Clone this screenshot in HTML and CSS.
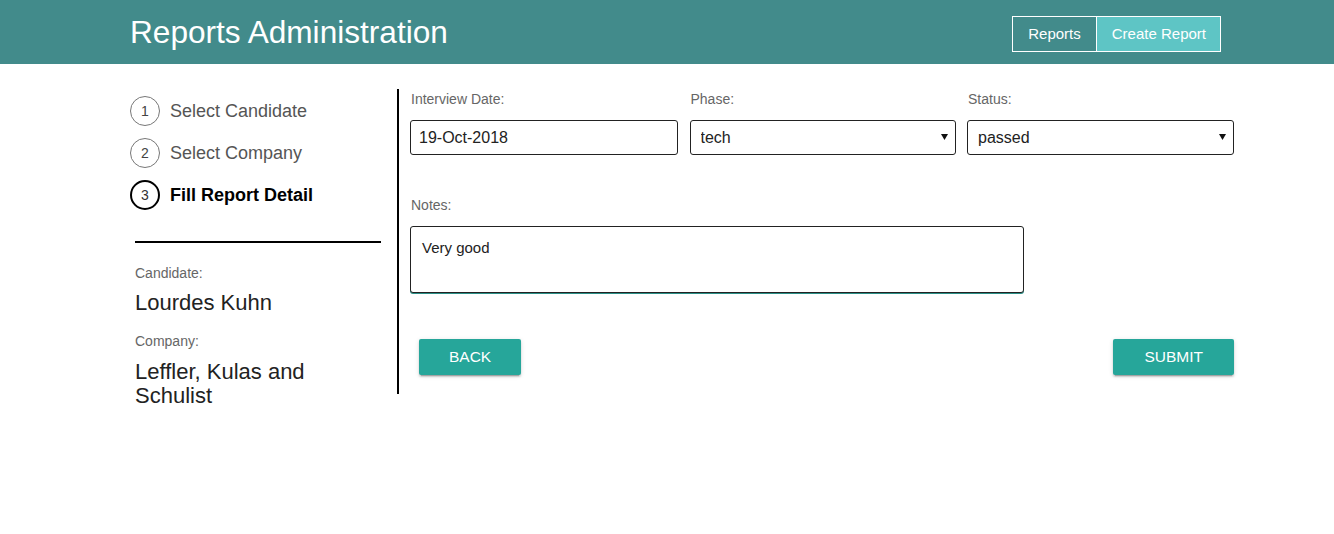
FILE: index.html
```html
<!DOCTYPE html>
<html>
<head>
<meta charset="utf-8">
<link rel="stylesheet" href="styles.css">
</head>
<body>
<header class="topbar">
  <div class="topbar-inner">
    <h1 class="title">Reports Administration</h1>
    <nav class="nav">
      <a class="nav-btn">Reports</a>
      <a class="nav-btn active">Create Report</a>
    </nav>
  </div>
</header>
<main class="page">
  <aside class="sidebar">
    <ol class="steps">
      <li class="step"><span class="step-num">1</span><span class="step-label">Select Candidate</span></li>
      <li class="step"><span class="step-num">2</span><span class="step-label">Select Company</span></li>
      <li class="step current"><span class="step-num">3</span><span class="step-label">Fill Report Detail</span></li>
    </ol>
    <hr class="divider">
    <div class="summary">
      <div class="sum-label">Candidate:</div>
      <div class="sum-value">Lourdes Kuhn</div>
      <div class="sum-label">Company:</div>
      <div class="sum-value">Leffler, Kulas and Schulist</div>
    </div>
  </aside>
  <section class="form">
    <div class="row3">
      <div class="field">
        <label class="label">Interview Date:</label>
        <input class="input" type="text" value="19-Oct-2018">
      </div>
      <div class="field">
        <label class="label">Phase:</label>
        <div class="select-wrap">
          <select class="input select"><option>tech</option></select>
          <svg class="caret" width="7" height="6" viewBox="0 0 7 6"><path d="M0 0H7L3.5 6Z" fill="#111"/></svg>
        </div>
      </div>
      <div class="field">
        <label class="label">Status:</label>
        <div class="select-wrap">
          <select class="input select"><option>passed</option></select>
          <svg class="caret" width="7" height="6" viewBox="0 0 7 6"><path d="M0 0H7L3.5 6Z" fill="#111"/></svg>
        </div>
      </div>
    </div>
    <div class="field notes">
      <label class="label">Notes:</label>
      <textarea class="textarea">Very good</textarea>
    </div>
    <div class="actions">
      <button class="btn">BACK</button>
      <button class="btn">SUBMIT</button>
    </div>
  </section>
</main>
</body>
</html>
```
FILE: styles.css
```css
* { box-sizing: border-box; }
body {
  margin: 0;
  font-family: "Liberation Sans", Arial, sans-serif;
  color: #222;
  background: #fff;
}
.topbar {
  background: #428b8b;
  height: 64px;
}
.topbar-inner {
  width: 1091px;
  margin-left: 130px;
  height: 64px;
  display: flex;
  align-items: center;
  justify-content: space-between;
}
.title {
  margin: 0;
  font-weight: normal;
  font-size: 31.6px;
  color: #fff;
  line-height: 1;
  position: relative;
  top: 1px;
}
.nav {
  display: flex;
  margin-top: 3px;
}
.nav-btn {
  display: block;
  height: 36px;
  line-height: 34px;
  padding: 0 15px;
  font-size: 15px;
  color: #fff;
  border: 1px solid #fff;
  cursor: pointer;
}
.nav-btn + .nav-btn { border-left: none; }
.nav-btn.active { background: #5ec5c5; padding: 0 14px 0 15px; }

.page {
  display: flex;
  width: 1104px;
  margin: 25px 0 0 130px;
  align-items: flex-start;
}
.sidebar {
  width: 267px;
  padding: 7px 16px 0 0;
}
.steps {
  list-style: none;
  margin: 0;
  padding: 0;
  display: flex;
  flex-direction: column;
  gap: 12px;
}
.step {
  display: flex;
  align-items: center;
  gap: 10px;
  height: 30px;
}
.step-num {
  width: 30px;
  height: 30px;
  border: 1px solid #777;
  border-radius: 50%;
  display: flex;
  align-items: center;
  justify-content: center;
  font-size: 14px;
  color: #444;
}
.step-label {
  font-size: 18px;
  color: #555;
}
.step.current .step-num {
  border: 2px solid #000;
  color: #333;
}
.step.current .step-label {
  font-weight: bold;
  color: #000;
}
.divider {
  margin: 31px 0 0 5px;
  border: none;
  border-top: 2px solid #000;
  height: 0;
}
.summary {
  padding-left: 5px;
  margin-top: 22px;
}
.sum-label {
  font-size: 14px;
  color: #666;
  line-height: 16px;
}
.sum-value {
  font-size: 22px;
  color: #222;
  line-height: 24px;
  margin: 10px 0 18px;
  width: 200px;
}
.sum-label + .sum-value + .sum-label + .sum-value { margin-top: 11px; }

.form {
  flex: 1;
  border-left: 2px solid #000;
  padding: 0 0 19px 11px;
}
.row3 {
  display: grid;
  grid-template-columns: 268px 266px 267px;
  justify-content: space-between;
}
.field { display: flex; flex-direction: column; }
.label {
  font-size: 14px;
  color: #666;
  line-height: 20px;
  padding-left: 1px;
  margin-bottom: 11px;
}
.input {
  height: 35px;
  border: 1px solid #222;
  border-radius: 3px;
  font-family: "Liberation Sans", Arial, sans-serif;
  font-size: 16px;
  color: #222;
  padding: 0 10px;
  background: #fff;
  width: 100%;
  outline: none;
}
.row3 > .field:first-child .input { padding-left: 8px; }
.select-wrap { position: relative; }
.select {
  appearance: none;
  -webkit-appearance: none;
}
.caret {
  position: absolute;
  right: 8px;
  top: 14px;
  pointer-events: none;
}
.notes {
  width: 614px;
  margin-top: 40px;
}
.textarea {
  height: 67px;
  border: 1px solid #222;
  border-radius: 3px;
  font-family: "Liberation Sans", Arial, sans-serif;
  font-size: 15px;
  color: #222;
  padding: 12px 11px;
  resize: none;
  outline: none;
  box-shadow: 0 1px 0 #2a8f86;
}
.actions {
  display: flex;
  justify-content: space-between;
  margin: 46px 0 0 9px;
}
.btn {
  height: 36px;
  padding: 0 30px;
  border: none;
  border-radius: 2px;
  background: #26a69a;
  color: #fff;
  font-family: "Liberation Sans", Arial, sans-serif;
  font-size: 15.5px;
  box-shadow: 0 2px 2px rgba(0,0,0,0.14), 0 1px 5px rgba(0,0,0,0.12), 0 3px 1px -2px rgba(0,0,0,0.2);
  cursor: pointer;
}
.btn:last-child { padding: 0 31px; }
```
